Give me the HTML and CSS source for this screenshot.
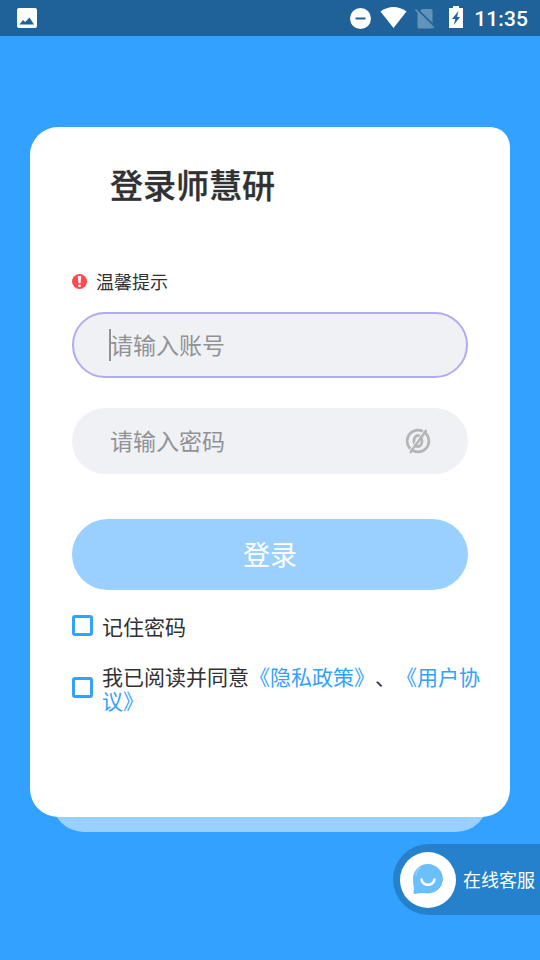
FILE: index.html
```html
<!DOCTYPE html>
<html lang="zh-CN">
<head>
<meta charset="utf-8">
<title>登录师慧研</title>
<link rel="stylesheet" href="styles.css">
</head>
<body>
<header class="status">
  <svg class="photo" width="20" height="20" viewBox="0 0 20 20"><rect width="20" height="20" rx="2" fill="#fff"/><path d="M2.500 16.500 6 12l2.200 2 4.300-4.500 4.500 7z" fill="#1e6299"/></svg>
  <div class="status-icons">
    <svg class="dnd" width="21" height="21" viewBox="0 0 21 21"><circle cx="10.500" cy="10.500" r="10.500" fill="#fff"/><path d="M5.500 10.500h10" stroke="#1e6299" stroke-width="2"/></svg>
    <svg class="wifi" width="27" height="21" viewBox="0 0 27 21"><path d="M.5 4.500Q6.500 0 13.500 0T26.500 4.500L13.500 21z" fill="#fff"/></svg>
    <svg class="sim" width="20" height="21" viewBox="0 0 20 21"><path d="M2.500 5.500 7 1h9q1.500 0 1.500 1.500v16.500q0 1.500-1.500 1.500H4q-1.500 0-1.500-1.500z" fill="#6293ba"/><path d="M1.600.6 20 19" stroke="#1e6299" stroke-width="2"/><path d="M.5 1.500 19 20" stroke="#6293ba" stroke-width="1.600"/></svg>
    <svg class="battery" width="14" height="22" viewBox="0 0 14 22"><path d="M0 2h4V0h6v2h4v20H0z" fill="#fff"/><path d="M9.500 5 3 13h3.300L4.800 19 11 11H8z" fill="#1e6299"/></svg>
    <span class="clock">11:35</span>
  </div>
</header>
<main class="stage">
  <section class="card">
    <h1 class="title">登录师慧研</h1>
    <div class="hint">
      <svg width="15" height="15" viewBox="0 0 15 15"><circle cx="7.500" cy="7.500" r="7.500" fill="#ff4a50"/><path d="M5.800 2h3.400L8.500 9.300h-2z" fill="#fff"/><circle cx="7.500" cy="11.800" r="1.400" fill="#fff"/></svg>
      <span>温馨提示</span>
    </div>
    <div class="field field-active"><span class="caret"></span><span>请输入账号</span></div>
    <div class="field field-password"><span>请输入密码</span>
      <svg class="eye" width="26" height="26" viewBox="0 0 26 26" fill="none" stroke="#b4b5b6"><circle cx="13" cy="13" r="10.900" stroke-width="2.600"/><ellipse cx="13" cy="13" rx="4" ry="5.500" stroke-width="2.800"/><path d="M3.300 24 19.700 1.500" stroke="#f0f1f5" stroke-width="1"/><path d="M5 25 21.500 2" stroke-width="2.300"/></svg>
    </div>
    <div class="login"><span>登录</span></div>
    <div class="check-row remember"><span class="box"></span><span class="check-label">记住密码</span></div>
    <div class="check-row agreement"><span class="box"></span><p class="check-label">我已阅读并同意<a>《隐私政策》</a>、<a>《用户协议》</a></p></div>
  </section>
  <div class="under-card"></div>
</main>
<aside class="service">
  <span class="avatar"><svg width="32" height="32" viewBox="0 0 32 32"><path d="M1 15A14.700 14.700 0 1 1 16 30.500Q10 29.500 3 31Q.7 31 2 26Q1 21 1 15z" fill="#6bbffb"/><path d="M22 2.500a15 15 0 0 1-4 28 14.700 14.700 0 0 0 4-28z" fill="#54a9e9"/><path d="M4 12q1-5 4-7" fill="none" stroke="#93d2ff" stroke-width="1.500" stroke-linecap="round"/><path d="M9.500 16.500c1 7 12 7 13 0" fill="none" stroke="#fff" stroke-width="2.600" stroke-linecap="round"/></svg></span>
  <span class="service-label">在线客服</span>
</aside>
</body>
</html>
```
FILE: styles.css
```css
* { box-sizing: border-box; }
body {
  margin: 0;
  width: 540px;
  height: 960px;
  overflow: hidden;
  background: #33a1ff;
  color: #303133;
  font-family: "Noto Sans CJK SC", sans-serif;
  text-spacing-trim: space-all;
}
svg { display: block; flex: none; }
.status {
  height: 36px;
  padding: 0 12px 0 17px;
  display: flex;
  align-items: center;
  justify-content: space-between;
  background: #1e6299;
}
.status-icons { display: flex; align-items: center; }
.wifi { margin: -1px 0 0 9px; }
.sim { margin-left: 8px; }
.battery { margin: -2px 11px 0 14px; }
.clock {
  color: #fff;
  font: 500 21px/36px Roboto, sans-serif;
  letter-spacing: .1px;
  margin-top: 2px;
}
.stage { padding: 91px 30px 0; }
.card {
  position: relative;
  height: 690px;
  padding: 33px 28px 0 42px;
  border-radius: 28px 20px 28px 28px;
  background: #fff;
}
.title {
  margin: 0 0 0 38px;
  font-size: 33px;
  line-height: 48px;
  font-weight: 500;
  -webkit-text-stroke: .3px #303133;
}
.hint {
  margin-top: 60px;
  height: 26px;
  display: flex;
  align-items: center;
  gap: 9px;
  font-size: 18px;
}
.field {
  width: 396px;
  height: 66px;
  padding: 0 38px;
  display: flex;
  align-items: center;
  border-radius: 33px;
  background: #f0f1f5;
  color: #919295;
  font-size: 23px;
}
.field span:not(.caret), .login span { padding-bottom: 2px; }
.field-active { margin-top: 18px; padding: 0 35px; border: 2px solid #b0abf2; }
.caret { width: 2px; height: 32px; margin-right: -1px; background: #919295; }
.field-password { margin-top: 30px; }
.eye { margin: 0 -1px 0 auto; }
.login {
  width: 396px;
  height: 71px;
  margin-top: 45px;
  display: flex;
  align-items: center;
  justify-content: center;
  border-radius: 36px;
  background: #99d0ff;
  color: #fff;
  font-size: 27px;
}
.check-row { display: flex; align-items: center; gap: 9px; font-size: 21px; line-height: 24px; }
.remember { margin-top: 23px; }
.agreement { margin-top: 26px; }
.check-row .check-label { margin: 1px 0 -1px; }
.agreement .check-label { width: 385px; }
.agreement a { color: #33a1ff; }
.box { flex: none; width: 21px; height: 21px; border: 3px solid #33a1ff; border-radius: 3px; }
.under-card {
  height: 40px;
  margin: -25px 22px 0;
  border-radius: 0 0 32px 32px;
  background: #99d0ff;
}
.service {
  position: absolute;
  right: 0;
  top: 844px;
  width: 147px;
  height: 71px;
  padding-left: 7px;
  display: flex;
  align-items: center;
  gap: 7px;
  border-radius: 36px 0 0 36px;
  background: #2681cc;
  color: #fff;
  font-size: 18px;
  white-space: nowrap;
}
.service-label { padding-bottom: 1px; }
.avatar {
  width: 56px;
  height: 56px;
  flex: none;
  display: grid;
  place-items: center;
  padding: 0 1px 2px 0;
  border-radius: 50%;
  background: #fff;
}
```
